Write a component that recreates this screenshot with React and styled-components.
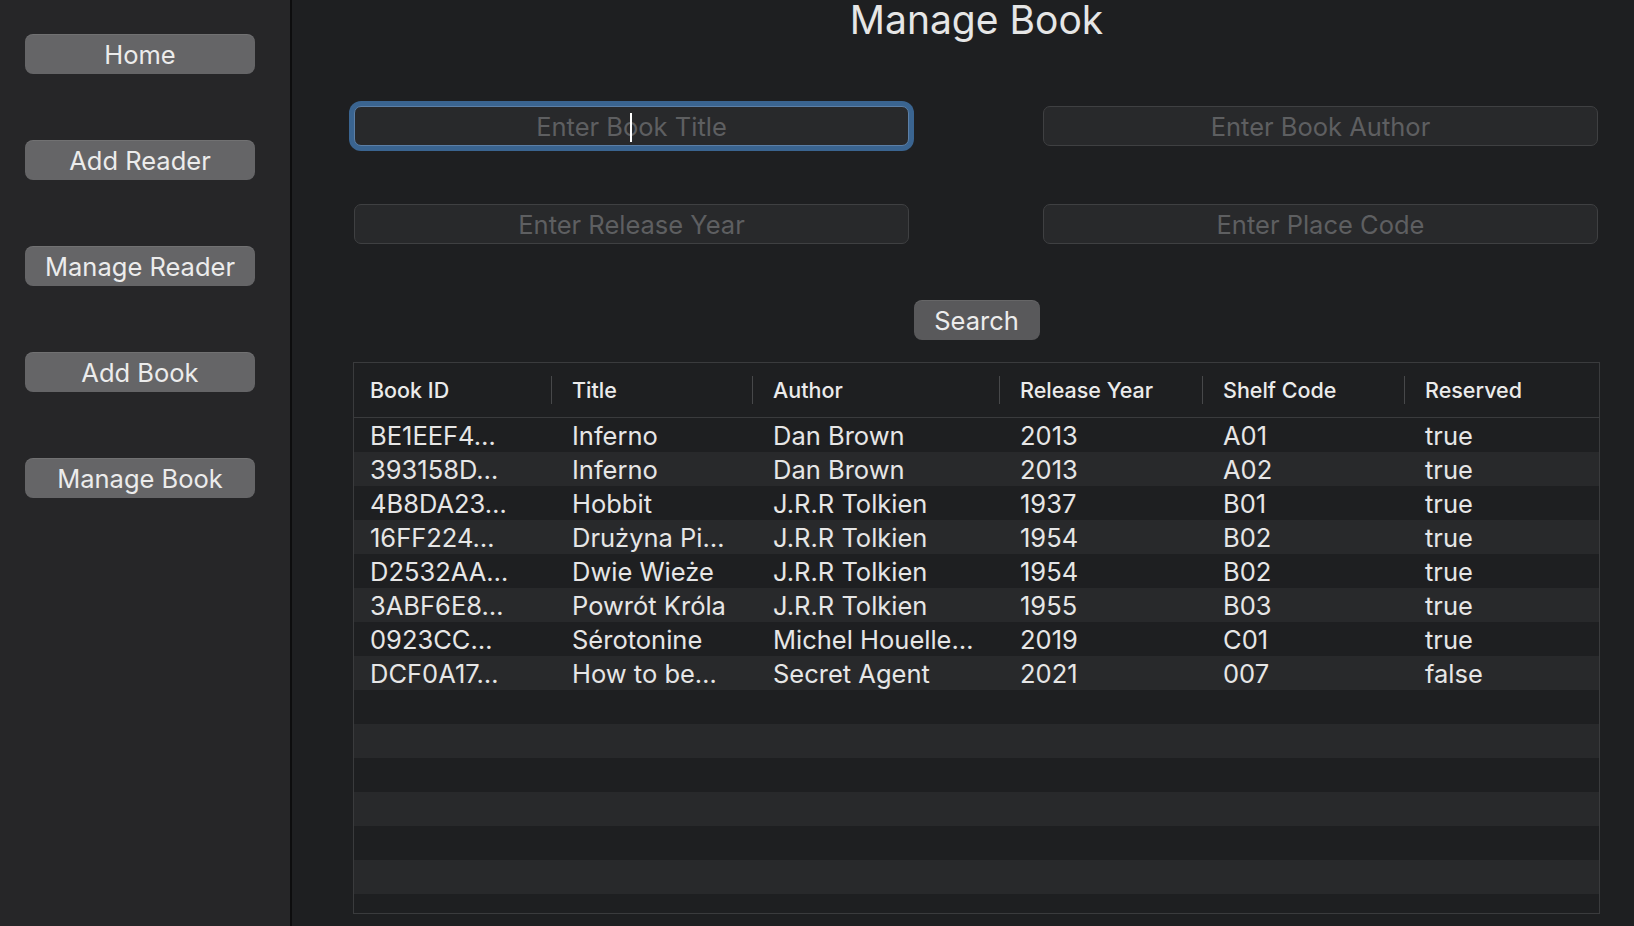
import React from "react";
import styled, { createGlobalStyle } from "styled-components";

const Global = createGlobalStyle`
  html, body { margin: 0; padding: 0; background: #1e1f21; }
  body { font-family: Inter, "Noto Sans", sans-serif; color: #e4e4e4; }
  * { box-sizing: border-box; }
`;

const Shell = styled.div`
  display: flex;
  width: 1634px;
  height: 926px;
  overflow: hidden;
  background: #1e1f21;
`;

const Sidebar = styled.nav`
  width: 292px;
  flex: none;
  background: #262628;
  border-right: 2px solid #0d0d0e;
  display: flex;
  flex-direction: column;
  gap: 66px;
  padding: 34px 0 0 25px;
`;

const NavButton = styled.button`
  width: 230px;
  height: 40px;
  border: none;
  border-radius: 8px;
  background: #656567;
  color: #ececec;
  font-family: Inter, sans-serif;
  font-size: 25.5px;
  padding: 0;
  box-shadow: inset 0 1px 0 rgba(255,255,255,0.08);
  cursor: pointer;
`;

const Main = styled.main`
  flex: 1;
  display: flex;
  flex-direction: column;
  padding: 0 34px 12px 61px;
  min-width: 0;
`;

const Title = styled.h1`
  margin: 0;
  text-align: center;
  font-size: 39px;
  font-weight: 400;
  color: #e6e6e6;
  line-height: 40px;
`;

const Form = styled.div`
  display: grid;
  grid-template-columns: 555px 555px;
  column-gap: 134px;
  row-gap: 58px;
  margin-top: 66px;
  padding-left: 1px;
`;

const Field = styled.div`
  position: relative;
  height: 40px;
  border-radius: 7px;
  background: #28292b;
  border: 1px solid #3f4042;
  ${(p) => p.$focused && `
    border-color: #5c7fa6;
    box-shadow: 0 0 0 5px #3a6490;
  `}
`;

const Input = styled.input`
  width: 100%;
  height: 100%;
  border: none;
  background: transparent;
  outline: none;
  text-align: center;
  font-family: Inter, sans-serif;
  font-size: 25.5px;
  color: #e4e4e4;
  caret-color: transparent;
  padding: 0;
  &::placeholder { color: #5e5f61; }
`;

const Caret = styled.span`
  position: absolute;
  left: 50%;
  top: 6px;
  width: 2px;
  height: 29px;
  background: #ffffff;
  transform: translateX(-2px);
`;

const SearchButton = styled.button`
  align-self: center;
  width: 126px;
  height: 40px;
  margin-top: 56px;
  border: none;
  border-radius: 8px;
  background: #59595b;
  color: #ececec;
  font-family: Inter, sans-serif;
  font-size: 25.5px;
  padding: 0;
  box-shadow: inset 0 1px 0 rgba(255,255,255,0.08);
`;

const Table = styled.div`
  margin-top: 22px;
  flex: 1;
  min-height: 0;
  border: 1px solid #3a3b3d;
  display: flex;
  flex-direction: column;
  overflow: hidden;
`;

const cols = "197px 201px 247px 203px 202px 1fr";

const HeaderRow = styled.div`
  display: grid;
  grid-template-columns: ${cols};
  height: 55px;
  border-bottom: 1px solid #3a3b3d;
  flex: none;
`;

const HeaderCell = styled.div`
  position: relative;
  display: flex;
  align-items: center;
  padding-left: ${(p) => (p.$first ? "16px" : "21px")};
  font-size: 21.5px;
  font-weight: 500;
  color: #ebebeb;
  ${(p) => !p.$first && `
    &::before {
      content: "";
      position: absolute;
      left: 0;
      top: 13px;
      bottom: 13px;
      width: 1px;
      background: #47484a;
    }
  `}
`;

const Body = styled.div`
  flex: 1;
  overflow: hidden;
`;

const Row = styled.div`
  display: grid;
  grid-template-columns: ${cols};
  height: 34px;
  align-items: center;
  background: ${(p) => (p.$alt ? "#28292b" : "#1e1f21")};
`;

const Cell = styled.div`
  padding-left: ${(p) => (p.$first ? "16px" : "21px")};
  font-size: 25.5px;
  color: #e6e6e6;
  white-space: nowrap;
  overflow: hidden;
`;

const headers = ["Book ID", "Title", "Author", "Release Year", "Shelf Code", "Reserved"];

const books = [
  ["BE1EEF4…", "Inferno", "Dan Brown", "2013", "A01", "true"],
  ["393158D…", "Inferno", "Dan Brown", "2013", "A02", "true"],
  ["4B8DA23…", "Hobbit", "J.R.R Tolkien", "1937", "B01", "true"],
  ["16FF224…", "Drużyna Pi…", "J.R.R Tolkien", "1954", "B02", "true"],
  ["D2532AA…", "Dwie Wieże", "J.R.R Tolkien", "1954", "B02", "true"],
  ["3ABF6E8…", "Powrót Króla", "J.R.R Tolkien", "1955", "B03", "true"],
  ["0923CC…", "Sérotonine", "Michel Houelle…", "2019", "C01", "true"],
  ["DCF0A17…", "How to be…", "Secret Agent", "2021", "007", "false"],
];

const navItems = ["Home", "Add Reader", "Manage Reader", "Add Book", "Manage Book"];

export default function App() {
  const rows = [...books];
  while (rows.length < 15) rows.push(null);
  return (
    <Shell>
      <Global />
      <Sidebar>
        {navItems.map((n) => (
          <NavButton key={n}>{n}</NavButton>
        ))}
      </Sidebar>
      <Main>
        <Title>Manage Book</Title>
        <Form>
          <Field $focused>
            <Input placeholder="Enter Book Title" />
            <Caret />
          </Field>
          <Field>
            <Input placeholder="Enter Book Author" />
          </Field>
          <Field>
            <Input placeholder="Enter Release Year" />
          </Field>
          <Field>
            <Input placeholder="Enter Place Code" />
          </Field>
        </Form>
        <SearchButton>Search</SearchButton>
        <Table>
          <HeaderRow>
            {headers.map((h, i) => (
              <HeaderCell key={h} $first={i === 0}>{h}</HeaderCell>
            ))}
          </HeaderRow>
          <Body>
            {rows.map((r, i) => (
              <Row key={i} $alt={i % 2 === 1}>
                {r
                  ? r.map((c, j) => (
                      <Cell key={j} $first={j === 0}>{c}</Cell>
                    ))
                  : null}
              </Row>
            ))}
          </Body>
        </Table>
      </Main>
    </Shell>
  );
}
